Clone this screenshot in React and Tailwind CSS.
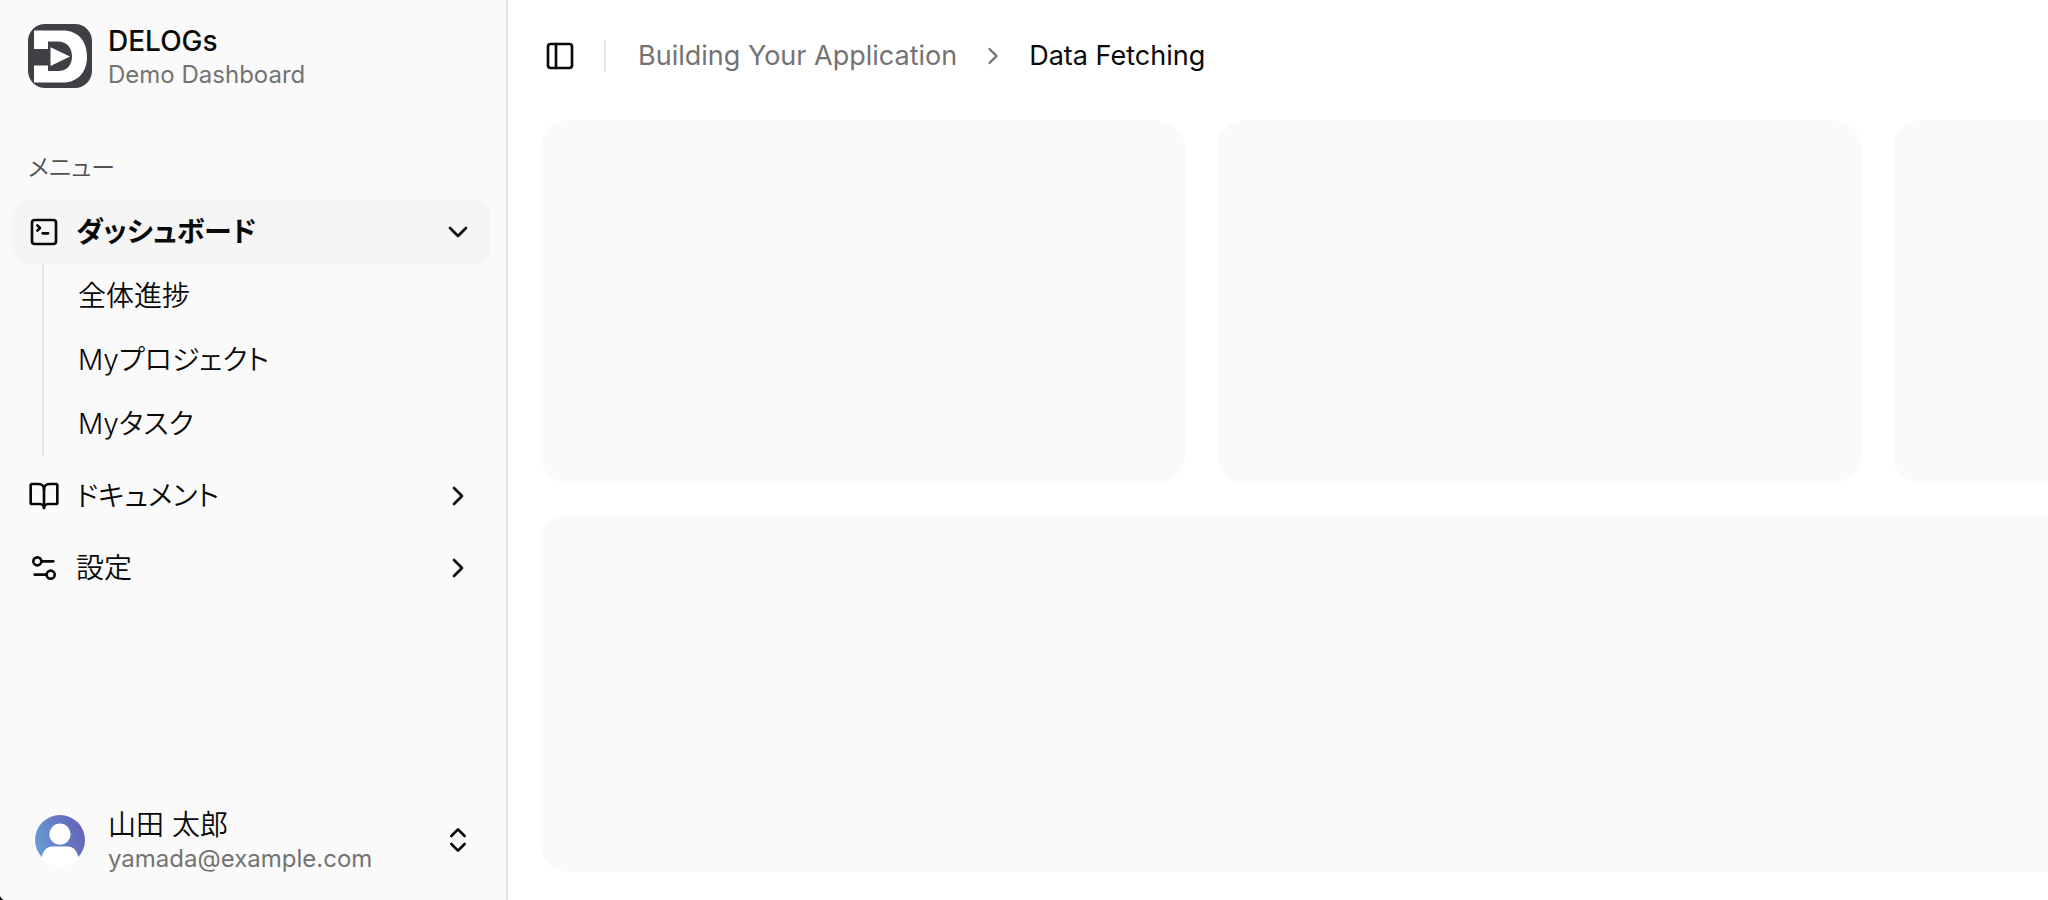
import {
  BookOpen,
  ChevronDown,
  ChevronRight,
  ChevronsUpDown,
  PanelLeft,
  Settings2,
  SquareTerminal,
} from "lucide-react";
import { useState } from "react";

const menuItems = [
  {
    title: "ダッシュボード",
    icon: SquareTerminal,
    items: ["全体進捗", "Myプロジェクト", "Myタスク"],
  },
  { title: "ドキュメント", icon: BookOpen, items: [] },
  { title: "設定", icon: Settings2, items: [] },
];

function Logo() {
  return (
    <svg viewBox="0 0 64 64" className="size-16 shrink-0" aria-hidden="true">
      <defs>
        <clipPath id="logo-clip">
          <rect width="64" height="64" rx="17" />
        </clipPath>
      </defs>
      <g clipPath="url(#logo-clip)">
        <rect width="64" height="64" fill="#3f3f46" />
        <path
          d="M6 6.5H35C50 6.5 59 17 59 32.5S50 58.5 35 58.5H6V41.5H20V47H30C39 47 44 41 44 32.5S39 17.5 30 17.5H20V25H6Z"
          fill="#fff"
        />
        <path d="M22.5 23.3 42 32.5 22.5 42Z" fill="#fff" />
      </g>
    </svg>
  );
}

function Avatar() {
  return (
    <svg viewBox="0 0 64 64" className="size-16 shrink-0" aria-hidden="true">
      <defs>
        <linearGradient id="avatar-bg" x1="0" y1="0.7" x2="1" y2="0.3">
          <stop offset="0" stopColor="#669fd6" />
          <stop offset="1" stopColor="#6660b8" />
        </linearGradient>
      </defs>
      <circle cx="32" cy="32" r="25" fill="url(#avatar-bg)" />
      <circle cx="32" cy="26.2" r="10.6" fill="#fff" />
      <path
        d="M13.5 50C15 43 18 38.5 25 38.5H39C46 38.5 49 43 50.5 50A26 26 0 0 1 13.5 50Z"
        fill="#fff"
      />
    </svg>
  );
}

function MenuItem({ item, isOpen, onToggle }) {
  const Icon = item.icon;
  const Chevron = isOpen ? ChevronDown : ChevronRight;

  return (
    <li>
      <button
        type="button"
        aria-expanded={isOpen}
        onClick={onToggle}
        className={`flex h-16 w-full items-center gap-4 rounded-2xl px-4 text-left ${
          isOpen ? "bg-neutral-100 font-bold" : "font-[350] hover:bg-neutral-100"
        }`}
      >
        <Icon size={32} />
        <span className="flex-1">{item.title}</span>
        <Chevron size={32} />
      </button>
      {isOpen && item.items.length > 0 && (
        <ul className="ml-[30px] border-l-2 border-neutral-200 pl-8">
          {item.items.map((name) => (
            <li key={name}>
              <a href="#" className="flex h-16 items-center px-0.5 font-[350]">
                {name}
              </a>
            </li>
          ))}
        </ul>
      )}
    </li>
  );
}

function Sidebar() {
  const [openTitle, setOpenTitle] = useState("ダッシュボード");

  return (
    <aside className="flex w-[508px] shrink-0 flex-col border-r-2 border-neutral-200 bg-neutral-50 pr-4 pl-3">
      <a href="#" className="flex h-28 items-center gap-4 px-4">
        <Logo />
        <span className="flex flex-col pt-0.5">
          <span className="leading-9 font-medium">DELOGs</span>
          <span className="text-2xl leading-8 text-neutral-500">
            Demo Dashboard
          </span>
        </span>
      </a>

      <nav className="flex-1 pt-6" aria-labelledby="menu-label">
        <h2
          id="menu-label"
          className="flex h-16 items-center px-4 text-2xl font-[350] text-neutral-600"
        >
          メニュー
        </h2>
        <ul className="flex flex-col gap-2">
          {menuItems.map((item) => (
            <MenuItem
              key={item.title}
              item={item}
              isOpen={openTitle === item.title}
              onToggle={() =>
                setOpenTitle(openTitle === item.title ? null : item.title)
              }
            />
          ))}
        </ul>
      </nav>

      <button
        type="button"
        className="mb-3 flex h-24 items-center gap-4 rounded-2xl px-4 text-left"
      >
        <Avatar />
        <span className="flex flex-1 flex-col pt-0.5">
          <span className="leading-9 font-[350]">山田 太郎</span>
          <span className="text-2xl leading-8 text-neutral-500">
            yamada@example.com
          </span>
        </span>
        <ChevronsUpDown size={32} />
      </button>
    </aside>
  );
}

function Header() {
  return (
    <header className="flex h-28 items-center px-9">
      <button type="button" aria-label="Toggle Sidebar">
        <PanelLeft size={32} />
      </button>
      <div className="mr-8 ml-7 h-8 w-0.5 bg-neutral-200" />
      <nav aria-label="breadcrumb">
        <ol className="flex items-center gap-[22px] text-[27px]">
          <li>
            <a href="#" className="text-neutral-500">
              Building Your Application
            </a>
          </li>
          <li aria-hidden="true" className="text-neutral-500">
            <ChevronRight size={28} />
          </li>
          <li aria-current="page">Data Fetching</li>
        </ol>
      </nav>
    </header>
  );
}

export default function App() {
  return (
    <div className="relative flex min-h-screen overflow-hidden bg-white font-['Inter','Noto_Sans_CJK_JP',sans-serif] text-[28px] leading-10 text-neutral-950 [font-feature-settings:'palt']">
      <Sidebar />
      <div className="flex min-w-0 flex-1 flex-col">
        <Header />
        <main className="flex flex-1 flex-col gap-8 overflow-hidden pt-2 pb-7 pl-8">
          <div className="grid auto-cols-[42.75%] grid-flow-col gap-8">
            <div className="aspect-video rounded-[28px] bg-neutral-50" />
            <div className="aspect-video rounded-[28px] bg-neutral-50" />
            <div className="aspect-video rounded-[28px] bg-neutral-50" />
          </div>
          <div className="flex-1 rounded-l-[28px] bg-neutral-50" />
        </main>
      </div>
      {/* rounded window corner */}
      <svg
        viewBox="0 0 4 4"
        className="absolute bottom-0 left-0 size-1"
        aria-hidden="true"
      >
        <path d="M0 0Q1 3 4 4H0Z" fill="#000" />
      </svg>
    </div>
  );
}
